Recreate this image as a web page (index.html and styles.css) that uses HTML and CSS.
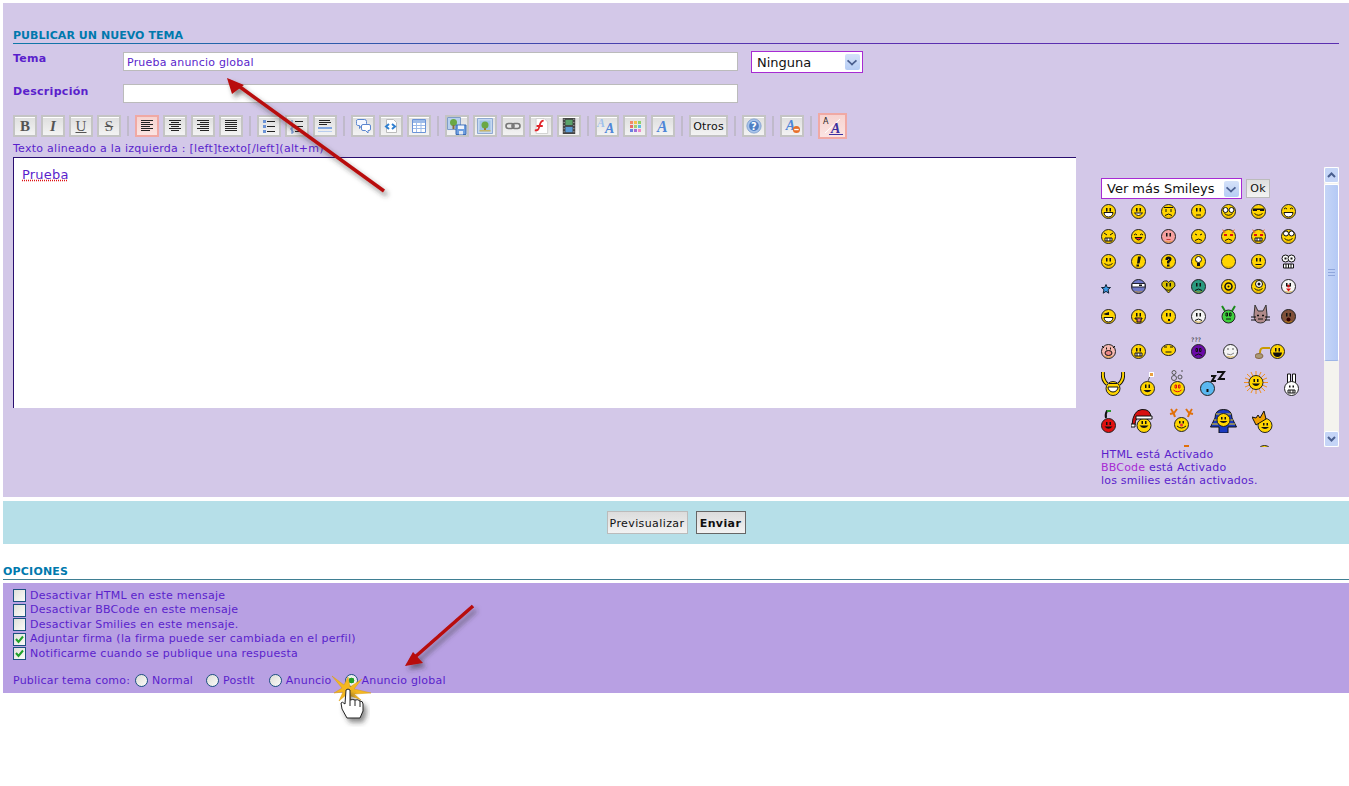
FILE: index.html
```html
<!DOCTYPE html>
<html lang="es">
	<head>
		<meta charset="utf-8" />
		<title>Publicar un nuevo tema</title>
		<link rel="stylesheet" href="styles.css">
	</head>
	<body>
		<!-- shared icon parts -->
		<svg class="defs" width="0" height="0">
			<symbol id="face" viewBox="0 0 15 15"><circle cx="7.5" cy="7.5" r="7" stroke="#222" stroke-width="1"/><path d="M3 11.5a6 6 0 0 0 9 0a7 5 0 0 1-9 0z" fill="#d99a00" stroke="none"/></symbol>
			<symbol id="dots" viewBox="0 0 15 15"><path d="M5 4h1.500v3.500h-1.500zM8.500 4h1.500v3.500h-1.500z" fill="#111" stroke="none"/></symbol>
			<symbol id="grin" viewBox="0 0 15 15"><path d="M3 8.500h9a4.500 4.500 0 0 1-9 0z" fill="#fff" stroke="#111"/></symbol>
			<symbol id="smile" viewBox="0 0 15 15"><path d="M3.500 9.500q4 3.500 8 0" fill="none" stroke="#111"/></symbol>
			<symbol id="sad" viewBox="0 0 15 15"><path d="M4 11.500q3.500-3 7 0" fill="none" stroke="#111"/></symbol>
			<symbol id="flat" viewBox="0 0 15 15"><path d="M4.500 10.500h6" fill="none" stroke="#111"/></symbol>
			<symbol id="teeth" viewBox="0 0 15 15"><path d="M4 9h7v3h-7zM6 9v3M9 9v3" fill="#fff" stroke="#111"/></symbol>

			<symbol id="i-left" viewBox="0 0 16 16"><path d="M2 2.500h12M2 4.500h9M2 6.500h12M2 8.500h9M2 10.500h12M2 12.500h9" stroke="#222"/></symbol>
			<symbol id="i-center" viewBox="0 0 16 16"><path d="M2 2.500h12M4 4.500h8M2 6.500h12M4 8.500h8M2 10.500h12M4 12.500h8" stroke="#222"/></symbol>
			<symbol id="i-right" viewBox="0 0 16 16"><path d="M2 2.500h12M5 4.500h9M2 6.500h12M5 8.500h9M2 10.500h12M5 12.500h9" stroke="#222"/></symbol>
			<symbol id="i-just" viewBox="0 0 16 16"><path d="M2 2.500h12M2 4.500h12M2 6.500h12M2 8.500h12M2 10.500h12M2 12.500h12" stroke="#222"/></symbol>
			<symbol id="i-ul" viewBox="0 0 16 16"><path d="M6 3.500h8M6 8.500h8M6 13.500h8" stroke="#222"/><path d="M2 2h3v3h-3zM2 7h3v3h-3zM2 12h3v3h-3z" fill="#6b93d6"/></symbol>
			<symbol id="i-ol" viewBox="0 0 16 16"><path d="M6 3.500h8M6 8.500h8M6 13.500h8" stroke="#222"/><path d="M3 2v4M2 8h2v2h-2v2h2M2 13h2v2h-2" stroke="#5b86cf" fill="none"/></symbol>
			<symbol id="i-hr" viewBox="0 0 16 16"><path d="M2 2.500h11M2 4.500h12M2 6.500h8" stroke="#222"/><path d="M1 9h14v2h-14z" fill="#7fa5e0"/><path d="M1 13.500h14" stroke="#b9cdee"/></symbol>
			<symbol id="i-quote" viewBox="0 0 16 16"><path d="M2.500 1.500h7q2 0 2 2v2q0 2-2 2h-3l-2 3v-3h-2q-1 0-1-2v-2q0-2 1-2z" fill="#f3f7ff" stroke="#5b86cf"/><path d="M8 6.500h6q1.500 0 1.500 1.500v3q0 1.500-1.500 1.500h-1v2.500l-2.500-2.500h-2.500q-1.500 0-1.500-1.500v-3q0-1.500 1.500-1.500z" fill="#fff" stroke="#5b86cf"/></symbol>
			<symbol id="i-code" viewBox="0 0 16 16"><path d="M3.500 1.500h7l3 3v10h-10z" fill="#fff" stroke="#bbb"/><path d="M6 6l-3 2.500 3 2.500M9 6l3 2.500-3 2.500" fill="none" stroke="#2f7fd0" stroke-width="2"/></symbol>
			<symbol id="i-table" viewBox="0 0 16 16"><path d="M1.500 1.500h13v13h-13z" fill="#fff" stroke="#6b93d6"/><path d="M2 2h12v3h-12z" fill="#9dbbe8"/><path d="M2 7.500h12M2 10.500h12M5.500 5v9M10 5v9" stroke="#9dbbe8"/></symbol>
			<symbol id="i-imgsave" viewBox="0 0 20 18"><path d="M.5.500h13v12h-13z" fill="#b7d0ee" stroke="#7f9cc8"/><circle cx="6.500" cy="5.500" r="3.500" fill="#6aa845"/><path d="M5.500 8h2v4h-2z" fill="#8a6a3a"/><path d="M9 8h10v9.500h-10z" fill="#6f9fe0" stroke="#3d6cb5"/><path d="M11 8.500h6v3.500h-6z" fill="#eef3fb"/><path d="M12 14h4v3.500h-4z" fill="#dfe8f5"/></symbol>
			<symbol id="i-img" viewBox="0 0 16 16"><path d="M.5.500h15v15h-15z" fill="#c6d8f0" stroke="#8fa9d2"/><path d="M2.500 2.500h11v11h-11z" fill="#9ec4e6"/><circle cx="8" cy="7" r="3.500" fill="#6aa845"/><path d="M7 10h2v3h-2z" fill="#9a7a3a"/><path d="M2.500 12h11v1.500h-11z" fill="#c9b66a"/></symbol>
			<symbol id="i-link" viewBox="0 0 16 16"><rect x="1" y="5.500" width="8" height="5" rx="2.500" fill="none" stroke="#777" stroke-width="1.600"/><rect x="7" y="5.500" width="8" height="5" rx="2.500" fill="none" stroke="#777" stroke-width="1.600"/></symbol>
			<symbol id="i-flash" viewBox="0 0 16 18"><path d="M2.500.500h9l4 4v13h-13z" fill="#fff" stroke="#ccc"/><path d="M11 3c-4 0-4 4-5 7s-1 4-5 4M3 9h7" fill="none" stroke="#e0252a" stroke-width="2"/></symbol>
			<symbol id="i-film" viewBox="0 0 14 18"><path d="M0 0h14v18h-14z" fill="#444"/><path d="M3 2h8v6h-8z" fill="#5aa36a"/><path d="M3 10h8v6h-8z" fill="#5b9bd5"/><path d="M1 1.500h1M1 5h1M1 8.500h1M1 12h1M1 15.500h1M12 1.500h1M12 5h1M12 8.500h1M12 12h1M12 15.500h1" stroke="#ddd"/></symbol>
			<symbol id="i-colors" viewBox="0 0 16 16"><path d="M3 3h3v3h-3z" fill="#f08a6a"/><path d="M7 3h3v3h-3z" fill="#f5c04a"/><path d="M11 3h3v3h-3z" fill="#8fcf6a"/><path d="M3 7h3v3h-3z" fill="#e86a6a"/><path d="M7 7h3v3h-3z" fill="#a0d070"/><path d="M11 7h3v3h-3z" fill="#5bbfe0"/><path d="M3 11h3v3h-3z" fill="#6a7fe0"/><path d="M7 11h3v3h-3z" fill="#a070d8"/><path d="M11 11h3v3h-3z" fill="#f08ac8"/></symbol>
			<symbol id="i-help" viewBox="0 0 18 18"><circle cx="9" cy="9" r="8" fill="#a9c4ea" stroke="#7f9fd0"/><circle cx="9" cy="9" r="5.500" fill="#4f7fc4"/></symbol>
		</svg>

		<section class="post">
			<h2 class="post-title">PUBLICAR UN NUEVO TEMA</h2>
			<div class="rule"></div>

			<div class="field field-tema">
				<label class="field-label">Tema</label>
				<div class="text-input">Prueba anuncio global</div>
				<div class="select select-icon"><span>Ninguna</span><i class="drop"></i></div>
			</div>
			<div class="field field-desc">
				<label class="field-label">Descripción</label>
				<div class="text-input"></div>
			</div>

			<div class="toolbar">
				<button class="tb tb-letter"><b>B</b></button>
				<button class="tb tb-letter"><b><i>I</i></b></button>
				<button class="tb tb-letter"><span class="tb-u">U</span></button>
				<button class="tb tb-letter"><span class="tb-s">S</span></button>
				<span class="tb-sep"></span>
				<button class="tb tb-on"><svg class="ti"><use href="#i-left"/></svg></button>
				<button class="tb"><svg class="ti"><use href="#i-center"/></svg></button>
				<button class="tb"><svg class="ti"><use href="#i-right"/></svg></button>
				<button class="tb"><svg class="ti"><use href="#i-just"/></svg></button>
				<span class="tb-sep"></span>
				<button class="tb"><svg class="ti"><use href="#i-ul"/></svg></button>
				<button class="tb"><svg class="ti"><use href="#i-ol"/></svg></button>
				<button class="tb"><svg class="ti"><use href="#i-hr"/></svg></button>
				<span class="tb-sep"></span>
				<button class="tb"><svg class="ti"><use href="#i-quote"/></svg></button>
				<button class="tb"><svg class="ti"><use href="#i-code"/></svg></button>
				<button class="tb"><svg class="ti"><use href="#i-table"/></svg></button>
				<span class="tb-sep"></span>
				<button class="tb"><svg class="ti ti-big"><use href="#i-imgsave"/></svg></button>
				<button class="tb"><svg class="ti"><use href="#i-img"/></svg></button>
				<button class="tb"><svg class="ti"><use href="#i-link"/></svg></button>
				<button class="tb"><svg class="ti"><use href="#i-flash"/></svg></button>
				<button class="tb"><svg class="ti"><use href="#i-film"/></svg></button>
				<span class="tb-sep"></span>
				<button class="tb"><svg class="ti ti-big" viewBox="0 0 20 18"><text x="0" y="10" class="ta ta-pale">A</text><text x="8" y="16" class="ta">A</text></svg></button>
				<button class="tb"><svg class="ti"><use href="#i-colors"/></svg></button>
				<button class="tb"><svg class="ti" viewBox="0 0 16 16"><text x="2" y="14" class="ta ta-one">A</text></svg></button>
				<span class="tb-sep"></span>
				<button class="tb tb-text">Otros</button>
				<span class="tb-sep"></span>
				<button class="tb"><svg class="ti" viewBox="0 0 18 18"><use href="#i-help"/><text x="9" y="13" class="ta-q">?</text></svg></button>
				<span class="tb-sep"></span>
				<button class="tb"><svg class="ti" viewBox="0 0 18 18"><text x="2" y="14" class="ta ta-one">A</text><circle cx="14" cy="13" r="4" fill="#e8702a"/><path d="M11.500 13h5" stroke="#fff" stroke-width="1.500"/></svg></button>
				<span class="tb-sep"></span>
				<button class="tb tb-on tb-last"><svg class="ti ti-last" viewBox="0 0 22 20"><text x="1" y="8" class="ta-small">A</text><path d="M3 17L18 3" stroke="#fff"/><text x="9" y="17" class="ta ta-dark">A</text><path d="M7 18.500h14" stroke="#3a2fa0"/></svg></button>
			</div>
			<p class="hint">Texto alineado a la izquierda : [left]texto[/left](alt+m)</p>

			<div class="compose">
				<div class="editor"><span class="misspelled">Prueba</span></div>
				<aside class="side">
					<div class="side-box">
						<div class="smileys">
							<div class="more">
								<div class="select select-more"><span>Ver más Smileys</span><i class="drop"></i></div>
								<button class="ok-btn">Ok</button>
							</div>
							<div class="sm-grid">
								<div class="sm-row r25">
									<svg class="sm"><use href="#face"/><use href="#dots"/><use href="#grin"/></svg>
									<svg class="sm"><use href="#face"/><use href="#dots"/><path d="M3.500 9h8q-4 5-8 0z" fill="#fff" stroke="#111"/></svg>
									<svg class="sm"><use href="#face"/><path d="M3 3.500h9M5 5v3M10 5v3" stroke="#111" fill="none"/><use href="#sad"/></svg>
									<svg class="sm"><use href="#face"/><use href="#dots"/><path d="M5 11h5" stroke="#111"/></svg>
									<svg class="sm"><use href="#face"/><circle cx="4.500" cy="6" r="2.500" fill="#fff" stroke="#111"/><circle cx="10.500" cy="6" r="2.500" fill="#fff" stroke="#111"/><use href="#smile"/></svg>
									<svg class="sm"><use href="#face"/><path d="M2 4.500h11v2.500h-4v-1h-3v1h-4z" fill="#111"/><use href="#smile"/></svg>
									<svg class="sm"><use href="#face"/><path d="M3 5q1.500-2 3 0M9 5q1.500-2 3 0" stroke="#111" fill="none"/><use href="#grin"/></svg>
								</div>
								<div class="sm-row r25">
									<svg class="sm"><use href="#face"/><path d="M3 4l3 2M12 4l-3 2" stroke="#111"/><use href="#teeth"/></svg>
									<svg class="sm"><use href="#face"/><path d="M3 6q1.500-2 3 0M9 6q1.500-2 3 0" stroke="#111" fill="none"/><path d="M4 8.500h7q-3.500 5-7 0z" fill="#e23" stroke="#111"/></svg>
									<svg class="sm sm-pink"><use href="#face"/><use href="#dots"/><path d="M5.500 10.500h4" stroke="#c33"/></svg>
									<svg class="sm"><use href="#face"/><path d="M4 5l2 1M11 5l-2 1" stroke="#111"/><use href="#sad"/></svg>
									<svg class="sm"><use href="#face"/><path d="M1 0l2 4 2-1zM14 0l-2 4-2-1z" fill="#e8702a"/><path d="M3 5h3v2h-3zM9 5h3v2h-3z" fill="#d11"/><use href="#sad"/></svg>
									<svg class="sm"><use href="#face"/><path d="M1 0l2 4 2-1zM14 0l-2 4-2-1z" fill="#e8702a"/><path d="M3 5h3v2h-3zM9 5h3v2h-3z" fill="#d11"/><use href="#teeth"/></svg>
									<svg class="sm"><use href="#face"/><circle cx="5" cy="4.500" r="2.500" fill="#fff" stroke="#111"/><circle cx="10.500" cy="4.500" r="2.500" fill="#fff" stroke="#111"/><use href="#smile"/></svg>
								</div>
								<div class="sm-row r25">
									<svg class="sm"><use href="#face"/><use href="#dots"/><use href="#smile"/></svg>
									<svg class="sm"><use href="#face"/><path d="M7 2.500h3l-1.500 7h-2.500zM5.500 10.500h2.500v2h-2.500z" fill="#111"/></svg>
									<svg class="sm"><use href="#face"/><path d="M4.500 5q0-2.500 3-2.500t3 2.500q0 2-2 3v1.500h-2.500v-2.500q2-1 2-2h-1v1h-2.500zM6 10.500h2.500v2h-2.500z" fill="#111"/></svg>
									<svg class="sm"><use href="#face"/><circle cx="7.500" cy="5.500" r="3" fill="#fff" stroke="#111"/><path d="M6 9h3v3h-3z" fill="#111"/></svg>
									<svg class="sm"><use href="#face"/></svg>
									<svg class="sm"><use href="#face"/><use href="#dots"/><use href="#flat"/></svg>
									<svg class="sm"><circle cx="4.500" cy="4.500" r="3.500" fill="#fff" stroke="#111"/><circle cx="10.500" cy="4.500" r="3.500" fill="#fff" stroke="#111"/><path d="M3.500 3.500h2v2h-2zM9.500 3.500h2v2h-2z" fill="#111"/><path d="M2.500 10h10v4h-10zM5 10v4M7.500 10v4M10 10v4" fill="#fff" stroke="#111"/></svg>
								</div>
								<div class="sm-row r25">
									<svg class="sm sm-star" viewBox="0 0 10 10"><path d="M5 .5l1.300 3h3.200l-2.500 2.200.8 3.500-2.800-1.800-2.800 1.800.8-3.500L.5 3.500h3.200z" fill="#3a9be8" stroke="#123"/></svg>
									<svg class="sm sm-ninja"><use href="#face"/><path d="M1 4.500h13v3.500h-13z" fill="#fff" stroke="#223"/><path d="M8 5.500h3v1.500h-3z" fill="#111"/></svg>
									<svg class="sm sm-heart"><path d="M7.500 14L1 7q-1-4 2.500-5t4 1.500q1-2.500 4-1.500t2.500 5z" fill="#d8c000" stroke="#222"/><use href="#dots"/><use href="#smile"/></svg>
									<svg class="sm sm-green"><use href="#face"/><use href="#dots"/><use href="#sad"/></svg>
									<svg class="sm"><use href="#face"/><circle cx="7.500" cy="7.500" r="3.500" fill="none" stroke="#111" stroke-width="1.500"/><circle cx="7.500" cy="7.500" r="1" fill="#111"/></svg>
									<svg class="sm"><use href="#face"/><circle cx="8" cy="5" r="3.500" fill="#fff" stroke="#111"/><circle cx="8" cy="5" r="1.500" fill="#111"/><use href="#smile"/></svg>
									<svg class="sm sm-white"><use href="#face"/><circle cx="7.500" cy="7" r="1.500" fill="#d11"/><path d="M5 9.500h5l-2.500 3z" fill="#d11"/><use href="#dots"/></svg>
								</div>
								<div class="sm-row r30">
									<svg class="sm"><use href="#face"/><path d="M2 5l6-2v3h-3z" fill="#111"/><use href="#grin"/></svg>
									<svg class="sm"><use href="#face"/><use href="#dots"/><path d="M4 9h7v1h-1v3h-4v-3h-2z" fill="#d77" stroke="#111"/></svg>
									<svg class="sm"><use href="#face"/><use href="#dots"/><path d="M7 10l2 2M9 10l-2 2" stroke="#111"/></svg>
									<svg class="sm sm-white"><use href="#face"/><use href="#dots"/><use href="#sad"/></svg>
									<svg class="sm sm-alien" viewBox="0 0 15 19"><path d="M1 1l3 5M14 1l-3 5" stroke="#1a8a1a" stroke-width="2"/><circle cx="7.500" cy="11.500" r="6.500" fill="#3ed03e" stroke="#222"/><path d="M5 8h1.500v3h-1.500zM8.500 8h1.500v3h-1.500zM5 14h5" stroke="#111" fill="none"/></svg>
									<svg class="sm sm-cat" viewBox="0 0 19 19"><path d="M4 0l3 6h5l3-6 1 10q0 8-6.500 8t-6.500-8z" fill="#b08a8a" stroke="#333"/><path d="M6.500 10h1v1h-1zM11.500 10h1v1h-1zM7 14h5M0 12h5M0 15h5M14 12h5M14 15h5" stroke="#111"/></svg>
									<svg class="sm sm-brown"><use href="#face"/><use href="#dots"/><circle cx="7.500" cy="10.500" r="2" fill="#300"/></svg>
								</div>
								<div class="sm-row r35 cols-6">
									<svg class="sm sm-pig"><use href="#face"/><path d="M1 2l2 2M14 2l-2 2" stroke="#111"/><ellipse cx="7.500" cy="9" rx="3.500" ry="2.500" fill="#e88" stroke="#111"/><path d="M5 3.500h1v2h-1zM9 3.500h1v2h-1z" fill="#111"/></svg>
									<svg class="sm"><use href="#face"/><use href="#dots"/><use href="#teeth"/></svg>
									<svg class="sm sm-flat" viewBox="0 0 15 12"><ellipse cx="7.500" cy="6" rx="7" ry="5.500" fill="#ffd500" stroke="#222"/><path d="M3 3h3M9 3h3M4.500 8h6" stroke="#111"/></svg>
									<svg class="sm sm-purple" viewBox="0 0 15 22"><text x="0" y="5" class="sm-q">???</text><circle cx="7.500" cy="14.500" r="7" fill="#6a0aa8" stroke="#222"/><path d="M5 11.500h1.500v3h-1.500zM8.500 11.500h1.500v3h-1.500zM4 18.500q3.500-3 7 0" stroke="#111" fill="none"/></svg>
									<svg class="sm sm-white"><use href="#face"/><path d="M4 5h2M9 5h2" stroke="#555"/><path d="M4 10q4 2 7-1" stroke="#888" fill="none"/></svg>
									<svg class="sm sm-golf" viewBox="0 0 30 15"><path d="M15 4h-7q-3 0-3 5" fill="none" stroke="#c99a00" stroke-width="2"/><ellipse cx="4" cy="12" rx="4" ry="2.500" fill="#a97" stroke="#864"/><circle cx="22.500" cy="7.500" r="7" fill="#ffd500" stroke="#222"/><path d="M20 4h1.500v3.500h-1.500zM23.500 4h1.500v3.500h-1.500zM18 8.500h9a4.500 4.500 0 0 1-9 0z" fill="#111"/></svg>
								</div>
								<div class="sm-row r37 cols-7">
									<svg class="sm sm-arms" viewBox="0 0 24 24"><path d="M2 0q-1 8 4 12M22 0q1 8-4 12" fill="none" stroke="#111" stroke-width="4"/><path d="M2 0q-1 8 4 12M22 0q1 8-4 12" fill="none" stroke="#ffd500" stroke-width="2"/><circle cx="12" cy="16.500" r="7" fill="#ffd500" stroke="#222"/><path d="M8 11.500h8M7 15h10a5 5 0 0 1-10 0z" stroke="#111" fill="#fff"/></svg>
									<svg class="sm sm-bomb" viewBox="0 0 15 24"><path d="M8 9l2-5" stroke="#555"/><path d="M9 0h5v5h-5z" fill="#fff"/><path d="M10 1h3v3h-3z" fill="#e8a040"/><circle cx="7.500" cy="16.500" r="7" fill="#ffd500" stroke="#222"/><path d="M5 12.500h1.500v3.500h-1.500zM8.500 12.500h1.500v3.500h-1.500zM3.500 18h8q-4 4.500-8 0z" fill="#111"/></svg>
									<svg class="sm sm-bubble" viewBox="0 0 15 26"><circle cx="4" cy="2.500" r="2" fill="none" stroke="#555"/><circle cx="4" cy="8" r="2.500" fill="none" stroke="#555"/><circle cx="10" cy="7" r="2" fill="none" stroke="#555"/><path d="M11 1h2" stroke="#555"/><circle cx="7.500" cy="18.500" r="7" fill="#ffd500" stroke="#222"/><path d="M5 15h1.500v3h-1.500zM8.500 15h1.500v3h-1.500zM3.500 20q4 3.500 8 0" stroke="#d11" fill="none"/></svg>
									<svg class="sm sm-zzz" viewBox="0 0 26 25"><path d="M11 5h4l-3 5h4M17 1h7l-5 7h6" fill="none" stroke="#111" stroke-width="2"/><circle cx="7.500" cy="17.500" r="7" fill="#5ab8f0" stroke="#222"/><path d="M6.500 18h2v3h-2z" fill="#111"/></svg>
									<svg class="sm sm-sun" viewBox="0 0 24 23"><path d="M12 0v23M0 11.500h24M3 3l18 17M21 3L3 20M7 1l10 21M17 1L7 22M1 7l22 9M23 7L1 16" stroke="#f09020"/><circle cx="12" cy="11.500" r="7" fill="#ffd500" stroke="#222"/><path d="M9.500 8h1.500v3h-1.500zM13 8h1.500v3h-1.500zM8 12.500h8q-4 5-8 0z" fill="#111"/></svg>
									<svg class="sm sm-bunny" viewBox="0 0 15 23"><path d="M3.500 1h3v9h-3zM8.500 1h3v9h-3z" fill="#fff" stroke="#111"/><circle cx="7.500" cy="15.500" r="7" fill="#fff" stroke="#222"/><path d="M5 12.500h1.500v2h-1.500zM8.500 12.500h1.500v2h-1.500z" fill="#111"/><use href="#teeth" y="8" height="15" width="15"/></svg>
								</div>
								<div class="sm-row r37 cols-8">
									<svg class="sm sm-cherry" viewBox="0 0 15 23"><path d="M5 8q-1-4 1-7h4" stroke="#111" stroke-width="2" fill="none"/><path d="M6 1h4" stroke="#2a9a2a" stroke-width="2"/><circle cx="7.500" cy="15.500" r="7" fill="#e01010" stroke="#222"/><path d="M5 12h1.500v3h-1.500zM8.500 12h1.500v3h-1.500zM3.500 16.500h8q-4 4.500-8 0z" fill="#111"/></svg>
									<svg class="sm sm-santa" viewBox="0 0 22 24"><circle cx="13" cy="16.500" r="7" fill="#ffd500" stroke="#222"/><path d="M1 16Q2 1 11 .5T20 9H6q-2 3-2 7z" fill="#d81010" stroke="#111"/><path d="M5 7h16v3h-16zM0 15h4v3h-4z" fill="#fff" stroke="#111"/><path d="M10.500 12h1.500v3h-1.500zM14 12h1.500v3h-1.500zM8.500 16.500h9q-4.500 5-9 0z" fill="#111"/></svg>
									<svg class="sm sm-deer" viewBox="0 0 25 25"><path d="M6 10q-1-4-4-8M5 6L1 7M5 6l3-4M19 10q1-4 4-8M20 6l4 1M20 6l-3-4" stroke="#e0700a" stroke-width="2" fill="none"/><circle cx="12.500" cy="17.500" r="7" fill="#ffd500" stroke="#222"/><path d="M10 14h1.500v2.500h-1.500zM13.500 14h1.500v2.500h-1.500z" fill="#111"/><circle cx="12.500" cy="18" r="1.500" fill="#e33"/><path d="M8 19q4.500 4 9 0" stroke="#111" fill="none"/></svg>
									<svg class="sm sm-pharaoh" viewBox="0 0 27 24"><path d="M13.500.5Q5 .5 5 9L.5 18H9v6h9v-6h8.500L22 9Q22 .5 13.500.5z" fill="#1a3ac0" stroke="#111"/><path d="M6 5h15M4 11h4M19 11h4M2 15h6M19 15h6" stroke="#f0d020"/><circle cx="13.500" cy="11" r="6.500" fill="#ffd500" stroke="#222"/><path d="M11 8h1.500v2.500h-1.500zM14.500 8h1.500v2.500h-1.500zM9.500 12h8q-4 4-8 0z" fill="#111"/></svg>
									<svg class="sm sm-crown" viewBox="0 0 21 22"><circle cx="13" cy="14.500" r="7" fill="#ffd500" stroke="#222"/><path d="M0 6l4 1 2-3 2 3 4-7 2 8-10 6z" fill="#f0a000" stroke="#111"/><path d="M11 12h1.500v2.500h-1.500zM14.500 12h1.500v2.500h-1.500zM9 16h8q-4 4-8 0z" fill="#111"/></svg>
								</div>
								<div class="sm-row r27 cols-9">
									<svg class="sm sm-empty"></svg>
									<svg class="sm"><path d="M5 0h5v15h-5z" fill="#e0700a"/></svg>
									<svg class="sm sm-empty"></svg>
									<svg class="sm"><use href="#face"/></svg>
								</div>
							</div>
						</div>
						<div class="scrollbar">
							<div class="sb-btn"><svg class="sb-arrow" viewBox="0 0 9 6"><path d="M1 5l3.500-3.500L8 5" fill="none" stroke="#4a5f8f" stroke-width="2"/></svg></div>
							<div class="sb-thumb"><span class="sb-grip"></span></div>
							<div class="sb-track"></div>
							<div class="sb-btn"><svg class="sb-arrow" viewBox="0 0 9 6"><path d="M1 1l3.500 3.500L8 1" fill="none" stroke="#4a5f8f" stroke-width="2"/></svg></div>
						</div>
					</div>
					<div class="notes">
						<div>HTML está Activado</div>
						<div><a class="bbcode">BBCode</a> está Activado</div>
						<div>los smilies están activados.</div>
					</div>
				</aside>
			</div>
		</section>

		<div class="actions">
			<button class="act-btn">Previsualizar</button>
			<button class="act-btn act-main">Enviar</button>
		</div>

		<h2 class="opt-title">OPCIONES</h2>
		<div class="opt-rule"></div>
		<section class="options">
			<div class="opt-row"><span class="check"></span>Desactivar HTML en este mensaje</div>
			<div class="opt-row"><span class="check"></span>Desactivar BBCode en este mensaje</div>
			<div class="opt-row"><span class="check"></span>Desactivar Smilies en este mensaje.</div>
			<div class="opt-row"><span class="check"><svg viewBox="0 0 11 11"><path d="M2 5l2.500 3L9 2.500" fill="none" stroke="#1fa02a" stroke-width="2"/></svg></span>Adjuntar firma (la firma puede ser cambiada en el perfil)</div>
			<div class="opt-row"><span class="check"><svg viewBox="0 0 11 11"><path d="M2 5l2.500 3L9 2.500" fill="none" stroke="#1fa02a" stroke-width="2"/></svg></span>Notificarme cuando se publique una respuesta</div>
			<div class="radios">
				<span class="radios-label">Publicar tema como:</span>
				<span class="radio-item r-normal"><span class="radio"></span>Normal</span>
				<span class="radio-item r-postit"><span class="radio"></span>PostIt</span>
				<span class="radio-item r-anuncio"><span class="radio"></span>Anuncio</span>
				<span class="radio-item"><span class="radio radio-on"></span>Anuncio global</span>
			</div>
		</section>

		<!-- arrows and cursor pasted on top of the screenshot -->
		<svg class="marks" viewBox="0 0 1349 786">
			<defs>
				<filter id="soft" x="-30%" y="-30%" width="160%" height="160%"><feDropShadow dx="3" dy="4" stdDeviation="2.500" flood-color="#333" flood-opacity=".55"/></filter>
			</defs>
			<g filter="url(#soft)">
				<path d="M384 191L238 85.500" stroke="#b80808" stroke-width="3.500" fill="none"/>
				<path d="M227 78l17 7-12 9z" fill="#b80808"/>
				<path d="M473 606L415 657" stroke="#b80808" stroke-width="3.500" fill="none"/>
				<path d="M405 666l8-14 10 11z" fill="#b80808"/>
			</g>
			<path d="M348 677l2 10 12-8-8 10 17 4-17 1 7 6-10-4-1 5-3-7-8 7 4-9-9 1 8-5-10-12 12 9z" fill="#f5b81f" stroke="#d99a10" stroke-width=".5"/>
			<path d="M346 690q2-2 4 0v10q3-1 5 0 3-1 5 1 3 0 3 3v7l-3 7h-13l-5-9-1-6q1-2 4 1z" fill="#fff" stroke="#222" filter="url(#soft)"/>
			<path d="M350 700v6M355 700v6M360 701v6" stroke="#222" fill="none"/>
		</svg>
	</body>
</html>
```

FILE: styles.css
```css
*{
	padding: 0;
	margin: 0;
	box-sizing: border-box;
}
html,body{
	height: 100%;
	width: 100%;
	overflow: hidden;
}
body{
	position: relative;
	padding: 3px 0 0 3px;
	background-color: #fff;
	font-family: "DejaVu Sans", Verdana, sans-serif;
	font-size: 11px;
	letter-spacing: .2px;
	color: #5a1fcc;
}
button{
	font-family: inherit;
	letter-spacing: inherit;
}
.defs{
	position: absolute;
}

/* main panel */
.post{
	width: 1346px;
	padding: 24px 10px 10px;
	background-color: #d3c8e8;
}
.post-title{
	height: 16px;
	font-size: 11px;
	line-height: 17px;
	font-weight: bold;
	letter-spacing: .05px;
	color: #0079ad;
}
.rule{
	height: 1px;
	background: linear-gradient(to right, #0f78a8, #5a2fb0 60%);
}
.field{
	display: flex;
	height: 19px;
}
.field-tema{
	margin-top: 8px;
}
.field-desc{
	margin-top: 13px;
}
.field-label{
	width: 110px;
	font-weight: bold;
	line-height: 13px;
	letter-spacing: .3px;
}
.field-desc .field-label{
	padding-top: 1px;
}
.text-input{
	width: 615px;
	height: 19px;
	padding-left: 3px;
	line-height: 19px;
	background-color: #fff;
	border: 1px solid #bbb;
}
.select{
	display: flex;
	justify-content: space-between;
	align-items: center;
	padding: 0 2px 0 5px;
	background-color: #fff;
	border: 1px solid #a72bd3;
	font-size: 13px;
	letter-spacing: 0;
	color: #111;
}
.select-icon{
	width: 112px;
	height: 22px;
	margin: -1px 0 0 13px;
}
.drop{
	width: 15px;
	height: 16px;
	border-radius: 2px;
	background: linear-gradient(to bottom, #d5e2f9, #b6cdf5);
	position: relative;
}
.drop::after{
	content: "";
	position: absolute;
	left: 3px;
	top: 3px;
	width: 6px;
	height: 6px;
	border-right: 2px solid #4a5f8f;
	border-bottom: 2px solid #4a5f8f;
	transform: scale(.9,.8) rotate(45deg);
}

/* toolbar */
.toolbar{
	display: flex;
	align-items: center;
	gap: 4px;
	height: 26px;
	margin-top: 10px;
}
.tb{
	display: flex;
	align-items: center;
	justify-content: center;
	width: 24px;
	height: 22px;
	border: 2px solid #c4c4c4;
	background: linear-gradient(to bottom, #dedede, #f3f3f3);
	box-shadow: inset 0 1px #fff;
	font-size: 11px;
	color: #111;
}
.tb-letter{
	font-family: "Liberation Serif", serif;
	font-size: 15px;
	color: #555;
}
.tb-u{
	text-decoration: underline;
}
.tb-s{
	text-decoration: line-through;
}
.tb-text{
	width: 39px;
	padding: 0;
}
.tb-on{
	border-color: #f0a9a4;
	background: linear-gradient(to bottom, #f7d3d0, #fbe4e2);
	box-shadow: none;
}
.tb-last{
	width: 29px;
	height: 26px;
	padding: 0;
}
.tb-sep{
	width: 2px;
	height: 20px;
	margin: 0 2px;
	background-color: #c0bacb;
}
.ti{
	width: 16px;
	height: 16px;
}
.ti-big{
	width: 20px;
	height: 18px;
}
.ti-last{
	width: 22px;
	height: 20px;
}
.ta{
	font-family: "Liberation Serif", serif;
	font-weight: bold;
	font-style: italic;
	font-size: 14px;
	letter-spacing: 0;
	fill: #4f86d8;
}
.ta-pale{
	font-size: 12px;
	fill: #9fc0ec;
}
.ta-one{
	font-size: 16px;
}
.ta-dark{
	font-size: 14px;
	fill: #3a2fa0;
}
.ta-small{
	font-family: "DejaVu Sans", sans-serif;
	font-size: 8px;
	fill: #222;
}
.ta-q{
	font-family: "DejaVu Sans", sans-serif;
	font-size: 11px;
	font-weight: bold;
	fill: #fff;
	text-anchor: middle;
}
.hint{
	height: 14px;
	margin: 2px 0;
	line-height: 15px;
	letter-spacing: .27px;
}

/* editor + smileys */
.compose{
	display: flex;
	align-items: flex-start;
}
.editor{
	width: 1063px;
	height: 251px;
	padding: 9px 8px;
	background-color: #fff;
	border: 1px solid #2a0f6f;
	border-bottom: none;
	border-right: none;
	font-size: 13px;
	line-height: 15px;
}
.misspelled{
	text-decoration: underline dotted #e01010;
}
.side{
	width: 238px;
	margin: 10px 0 0 25px;
}
.side-box{
	display: flex;
	justify-content: space-between;
	height: 280px;
}
.smileys{
	width: 205px;
	height: 280px;
	padding-top: 11px;
	overflow: hidden;
}
.more{
	display: flex;
	align-items: center;
	gap: 4px;
	height: 21px;
}
.select-more{
	width: 141px;
	height: 21px;
}
.ok-btn{
	width: 24px;
	height: 19px;
	padding: 0;
	border: 1px solid #bbb;
	background: linear-gradient(to bottom, #dedede, #f3f3f3);
	font-size: 11px;
	color: #111;
}
.sm-grid{
	margin-top: 5px;
}
.sm-row{
	display: grid;
	grid-template-columns: repeat(7, 30px);
	align-items: end;
	height: 25px;
}
.sm-row:first-child{
	height: 15px;
}
.r30{ height: 30px; }
.r35{ height: 35px; }
.r37{ height: 37px; }
.r27{ height: 27px; }
.cols-6{ grid-template-columns: 30px 30px 30px 32px 32px auto; }
.cols-7{ grid-template-columns: 39px 30px 30px 44px 40px auto; }
.cols-8{ grid-template-columns: 30px 38px 41px 42px auto; }
.cols-9{ grid-template-columns: 78px 78px 0 auto; }
.sm{
	display: block;
	width: 15px;
	height: 15px;
	fill: #ffd500;
}
.sm-empty{ height: 0; }
.sm-pink{ fill: #f5a0a0; }
.sm-ninja{ fill: #6f79c8; }
.sm-green{ fill: #2a9a80; }
.sm-white{ fill: #f4f4f4; }
.sm-brown{ fill: #80503a; }
.sm-pig{ fill: #f5b8b0; }
.sm-star{ width: 10px; height: 10px; }
.sm-alien{ height: 19px; }
.sm-cat{ width: 19px; height: 19px; }
.sm-flat{ height: 12px; margin-bottom: 3px; }
.sm-purple{ height: 22px; }
.sm-golf{ width: 30px; }
.sm-arms{ width: 24px; height: 24px; }
.sm-bomb{ height: 24px; }
.sm-bubble{ height: 26px; }
.sm-zzz{ width: 26px; height: 25px; }
.sm-sun{ width: 24px; height: 23px; margin-bottom: 2px; }
.sm-bunny{ height: 23px; }
.sm-cherry{ height: 23px; }
.sm-santa{ width: 22px; height: 24px; }
.sm-deer{ width: 25px; height: 25px; margin-bottom: 1px; }
.sm-pharaoh{ width: 27px; height: 24px; }
.sm-crown{ width: 21px; height: 22px; }
.sm-q{
	font-family: "DejaVu Sans", sans-serif;
	font-size: 6px;
	fill: #222;
}
.scrollbar{
	display: flex;
	flex-direction: column;
	width: 15px;
	height: 280px;
	background-color: #f4f3ee;
}
.sb-btn{
	display: flex;
	align-items: center;
	justify-content: center;
	height: 16px;
	background-color: #c5d5f7;
	border: 1px solid #fff;
	border-radius: 2px;
}
.sb-arrow{
	width: 9px;
	height: 6px;
}
.sb-thumb{
	display: flex;
	align-items: center;
	justify-content: center;
	height: 177px;
	margin-top: 1px;
	background: linear-gradient(to right, #c5d5f7, #b4c9f5);
	border: 1px solid #fff;
	border-bottom-color: #9fb6e6;
	border-radius: 2px;
}
.sb-grip{
	width: 7px;
	height: 7px;
	border-top: 1px solid #8fa6dc;
	border-bottom: 1px solid #8fa6dc;
	background: linear-gradient(#8fa6dc, #8fa6dc) center/100% 1px no-repeat;
}
.sb-track{
	flex: 1;
}
.notes{
	margin-top: 1px;
	line-height: 13px;
}
.bbcode{
	color: #a72bd3;
}

/* buttons row */
.actions{
	display: flex;
	justify-content: center;
	align-items: center;
	gap: 8px;
	width: 1346px;
	height: 43px;
	margin-top: 4px;
	background-color: #b6dfe8;
}
.act-btn{
	width: 81px;
	height: 23px;
	padding: 1px 0 0;
	border: 1px solid #bbb;
	background: linear-gradient(to bottom, #dcdcdc, #f2f2f2);
	font-size: 11px;
	letter-spacing: .4px;
	color: #111;
}
.act-main{
	width: 50px;
	border-color: #666;
	font-weight: bold;
}

/* options */
.opt-title{
	height: 15px;
	margin-top: 20px;
	font-size: 11px;
	line-height: 15px;
	font-weight: bold;
	color: #0079ad;
}
.opt-rule{
	width: 1346px;
	height: 1px;
	background-color: #3f7f93;
}
.options{
	width: 1346px;
	height: 110px;
	margin-top: 3px;
	padding: 5.500px 10px 0;
	background-color: #b8a0e3;
}
.opt-row{
	display: flex;
	align-items: center;
	gap: 4px;
	height: 14.5px;
	line-height: 14px;
	letter-spacing: .25px;
}
.check{
	display: block;
	flex: none;
	width: 13px;
	height: 13px;
	border: 1px solid #1c5180;
	background: linear-gradient(135deg, #e0e0da, #fbfbf8);
}
.check svg{
	display: block;
	width: 11px;
	height: 11px;
}
.radios{
	display: flex;
	align-items: center;
	height: 14px;
	margin-top: 12.500px;
}
.radio-item{
	display: flex;
	align-items: center;
	gap: 4px;
}
.radios-label{
	margin-right: 5px;
}
.r-normal{
	margin-right: 13px;
}
.r-postit{
	margin-right: 14px;
}
.r-anuncio{
	margin-right: 13px;
}
.radio{
	display: block;
	width: 13px;
	height: 13px;
	border: 1px solid #1c5180;
	border-radius: 50%;
	background: linear-gradient(135deg, #dcdcd6, #fbfbf8);
}
.radio-on{
	background: radial-gradient(circle, #1fa02a 35%, #eee 40%);
}

.marks{
	position: absolute;
	left: 0;
	top: 0;
	width: 1349px;
	height: 786px;
	pointer-events: none;
}
```
